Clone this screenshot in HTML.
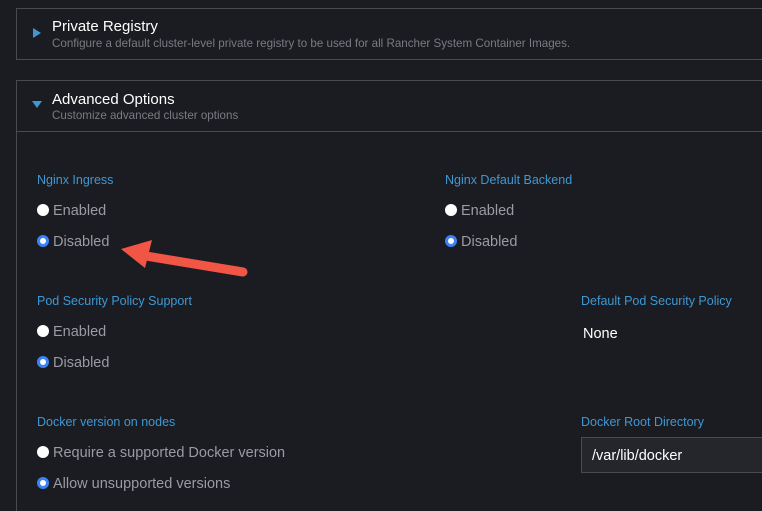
<!DOCTYPE html>
<html><head><meta charset="utf-8"><style>
*{margin:0;padding:0;box-sizing:border-box}
body{width:762px;height:504px;background:#1b1c21;font-family:"Liberation Sans",sans-serif;position:relative;overflow:hidden}
.a{position:absolute;white-space:nowrap}
.box{position:absolute;border:1px solid #4a4b50}
.t{color:#fff;font-size:15px}
.s{color:#7a7b82;font-size:11.6px}
.l{color:#3d98d3;font-size:12.5px}
.o{color:#9a9ba3;font-size:14.5px}
.r{position:absolute;width:12px;height:12px;border-radius:50%;background:#fff}
.r.c{background:#fff;border:3px solid #3b82f6}
</style></head><body>
<div class="box" style="left:16px;top:8px;width:760px;height:52px"></div>
<div class="box" style="left:16px;top:80px;width:760px;height:52px"></div>
<div class="a" style="left:16px;top:131px;width:1px;height:380px;background:#4a4b50"></div>
<svg class="a" style="left:0;top:0" width="762" height="504">
<polygon points="33,28 41,33 33,38" fill="#3d98d3"/>
<polygon points="32,101 42,101 37,108" fill="#3d98d3"/>
<path d="M140,255 L243,272" stroke="#f05545" stroke-width="9" stroke-linecap="round"/>
<polygon points="121,249 152,240 145,268" fill="#f05545"/>
</svg>
<div class="a t" style="left:52px;top:18px">Private Registry</div>
<div class="a s" style="left:52px;top:37px">Configure a default cluster-level private registry to be used for all Rancher System Container Images.</div>
<div class="a t" style="left:52px;top:91px">Advanced Options</div>
<div class="a s" style="left:52px;top:109px">Customize advanced cluster options</div>

<div class="a l" style="left:37px;top:173px">Nginx Ingress</div>
<div class="r" style="left:37px;top:204px"></div><div class="a o" style="left:53px;top:203px">Enabled</div>
<div class="r c" style="left:37px;top:235px"></div><div class="a o" style="left:53px;top:234px">Disabled</div>

<div class="a l" style="left:445px;top:173px">Nginx Default Backend</div>
<div class="r" style="left:445px;top:204px"></div><div class="a o" style="left:461px;top:203px">Enabled</div>
<div class="r c" style="left:445px;top:235px"></div><div class="a o" style="left:461px;top:234px">Disabled</div>

<div class="a l" style="left:37px;top:294px">Pod Security Policy Support</div>
<div class="r" style="left:37px;top:325px"></div><div class="a o" style="left:53px;top:324px">Enabled</div>
<div class="r c" style="left:37px;top:356px"></div><div class="a o" style="left:53px;top:355px">Disabled</div>

<div class="a l" style="left:581px;top:294px">Default Pod Security Policy</div>
<div class="a" style="left:583px;top:326px;color:#fff;font-size:14.5px">None</div>

<div class="a l" style="left:37px;top:415px">Docker version on nodes</div>
<div class="r" style="left:37px;top:446px"></div><div class="a o" style="left:53px;top:445px">Require a supported Docker version</div>
<div class="r c" style="left:37px;top:477px"></div><div class="a o" style="left:53px;top:476px">Allow unsupported versions</div>

<div class="a l" style="left:581px;top:415px">Docker Root Directory</div>
<div class="a" style="left:581px;top:437px;width:200px;height:36px;background:#25262c;border:1px solid #4a4b50"></div>
<div class="a" style="left:592px;top:448px;color:#fff;font-size:14.5px">/var/lib/docker</div>
</body></html>
